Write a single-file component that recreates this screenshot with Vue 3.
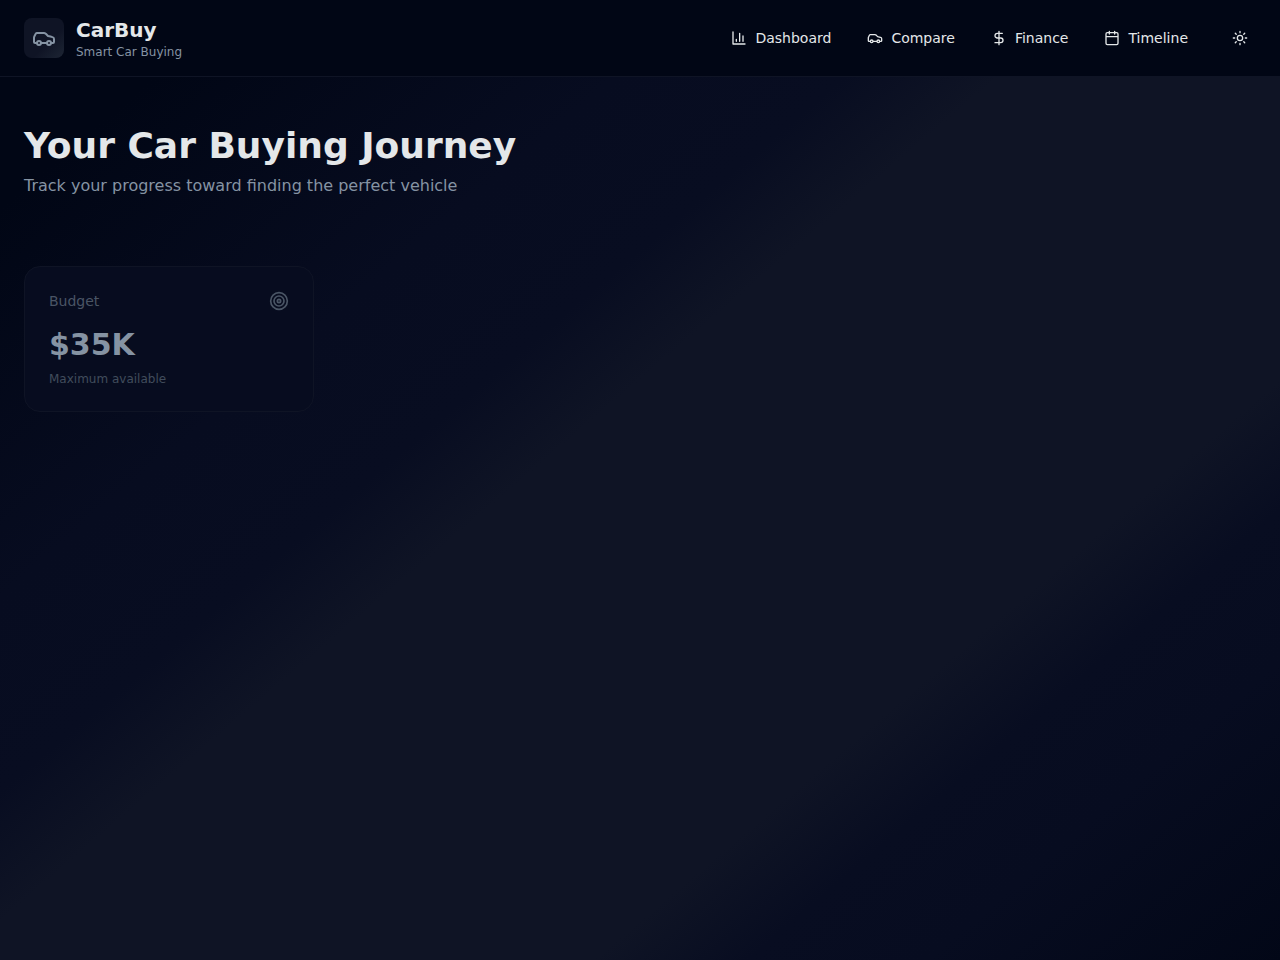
<script setup>
const carBody =
  'M19 17h2c.6 0 1-.4 1-1v-3c0-.9-.7-1.7-1.5-1.9C18.7 10.6 16 10 16 10s-1.3-1.4-2.2-2.3c-.5-.4-1.1-.7-1.8-.7H5c-.6 0-1.1.4-1.4.9l-1.4 2.9A3.7 3.7 0 0 0 2 12v4c0 .6.4 1 1 1h2'
const carIcon = `${carBody}M9 17h6M5 17a2 2 0 1 0 4 0a2 2 0 1 0-4 0M15 17a2 2 0 1 0 4 0a2 2 0 1 0-4 0`

const links = [
  { label: 'Dashboard', href: '#dashboard', icon: 'M3 3v18h18M18 17V9M13 17V5M8 17v-3' },
  { label: 'Compare', href: '#compare', icon: carIcon },
  { label: 'Finance', href: '#finance', icon: 'M12 2v20M17 5H9.5a3.5 3.5 0 0 0 0 7h5a3.5 3.5 0 0 1 0 7H6' },
  {
    label: 'Timeline',
    href: '#timeline',
    icon: 'M8 2v4M16 2v4M5 4h14a2 2 0 0 1 2 2v14a2 2 0 0 1-2 2H5a2 2 0 0 1-2-2V6a2 2 0 0 1 2-2zM3 10h18',
  },
]

const stats = [{ label: 'Budget', value: '$35K', note: 'Maximum available' }]
</script>

<template>
  <div class="page">
    <header class="header">
      <a class="brand" href="#home">
        <span class="logo">
          <svg class="icon-lg" viewBox="0 0 24 24" aria-hidden="true"><path :d="carIcon" /></svg>
        </span>
        <span class="brand-text">
          <span class="brand-name">CarBuy</span>
          <span class="brand-tagline">Smart Car Buying</span>
        </span>
      </a>
      <div class="actions">
        <nav class="nav">
          <a v-for="link in links" :key="link.label" class="nav-link" :href="link.href">
            <svg class="icon-sm" viewBox="0 0 24 24" aria-hidden="true"><path :d="link.icon" /></svg>
            {{ link.label }}
          </a>
        </nav>
        <button class="theme" type="button" aria-label="Toggle theme">
          <svg class="icon-sm" viewBox="0 0 24 24" aria-hidden="true">
            <circle cx="12" cy="12" r="4" />
            <path d="M12 2v2M12 20v2M4.93 4.93l1.41 1.41M17.66 17.66l1.41 1.41M2 12h2M20 12h2M6.34 17.66l-1.41 1.41M19.07 4.93l-1.41 1.41" />
          </svg>
        </button>
      </div>
    </header>

    <main class="main">
      <h1 class="title">Your Car Buying Journey</h1>
      <p class="subtitle">Track your progress toward finding the perfect vehicle</p>
      <section class="stats">
        <article v-for="stat in stats" :key="stat.label" class="card">
          <div class="card-head">
            <h2 class="card-label">{{ stat.label }}</h2>
            <svg class="icon-md" viewBox="0 0 24 24" aria-hidden="true">
              <circle cx="12" cy="12" r="10" />
              <circle cx="12" cy="12" r="6" />
              <circle cx="12" cy="12" r="2" />
            </svg>
          </div>
          <p class="card-value">{{ stat.value }}</p>
          <p class="card-note">{{ stat.note }}</p>
        </article>
      </section>
    </main>
  </div>
</template>

<style>
body {
  margin: 0;
  background: #010615;
}
</style>

<style scoped>
.page {
  display: flex;
  flex-direction: column;
  min-height: 100vh;
  color: #e4e7e9;
  font-family: "DejaVu Sans", sans-serif;
}

svg {
  flex: none;
  fill: none;
  stroke: currentColor;
  stroke-width: 2;
  stroke-linecap: round;
  stroke-linejoin: round;
}

.icon-sm {
  width: 16px;
  height: 16px;
}

.icon-md {
  width: 20px;
  height: 20px;
  color: #4a5565;
}

.icon-lg {
  width: 24px;
  height: 24px;
}

.header {
  display: flex;
  align-items: center;
  justify-content: space-between;
  padding: 16px 24px;
  border-bottom: 1px solid #0f1425;
  background: #010615;
}

.brand {
  display: flex;
  align-items: center;
  gap: 12px;
  color: inherit;
  text-decoration: none;
}

.logo {
  display: flex;
  align-items: center;
  justify-content: center;
  width: 40px;
  height: 40px;
  border-radius: 8px;
  background: linear-gradient(to bottom right, #0f1425 60%, #1d2534);
  color: #8593a3;
}

.brand-text {
  display: flex;
  flex-direction: column;
}

.brand-name {
  font-size: 20px;
  font-weight: 700;
  line-height: 28px;
}

.brand-tagline {
  color: #8593a3;
  font-size: 12px;
  line-height: 16px;
}

.actions {
  display: flex;
  align-items: center;
  gap: 24px;
}

.nav {
  display: flex;
  gap: 12px;
}

.nav-link {
  display: flex;
  align-items: center;
  gap: 8px;
  padding: 8px 12px;
  color: inherit;
  font-size: 14px;
  line-height: 20px;
  text-decoration: none;
}

.theme {
  display: flex;
  padding: 8px;
  border: 0;
  border-radius: 8px;
  background: transparent;
  color: inherit;
  cursor: pointer;
}

.main {
  flex: 1;
  padding: 49px 24px 48px;
  background: linear-gradient(
      to bottom right,
      #010615 6%,
      #070c20 24%,
      #080d21 33%,
      #0f1425 39%,
      #0f1425 64%,
      #080d21 70%,
      #070c20 77%,
      #010615 94%
    )
    0 0 / 100% 1082px;
}

.title {
  margin: 0 0 8px;
  font-size: 36px;
  font-weight: 700;
  line-height: 40px;
}

.subtitle {
  margin: 0;
  color: #8593a3;
  font-size: 16px;
  line-height: 24px;
}

.stats {
  display: grid;
  grid-template-columns: repeat(4, 1fr);
  gap: 24px;
  margin-top: 68px;
}

.card {
  padding: 24px;
  border: 1px solid #0f1425;
  border-radius: 16px;
  background: #070c1f;
}

.card-head {
  display: flex;
  align-items: center;
  justify-content: space-between;
  margin-bottom: 16px;
}

.card-label {
  margin: 0;
  color: #4a5565;
  font-size: 14px;
  font-weight: 400;
  line-height: 20px;
}

.card-value {
  margin: 0 0 8px;
  color: #8593a3;
  font-size: 30px;
  font-weight: 700;
  line-height: 36px;
}

.card-note {
  margin: 0;
  color: #414c5c;
  font-size: 12px;
  line-height: 16px;
}
</style>
